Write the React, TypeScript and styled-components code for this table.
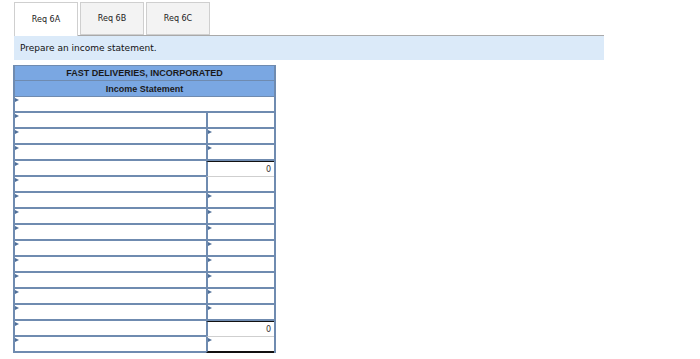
import * as React from 'react'
import styled, { createGlobalStyle } from 'styled-components'

const GlobalStyle = createGlobalStyle`
  html, body {
    margin: 0;
    padding: 0;
    background: #ffffff;
  }
`

const Page = styled.div`
  padding: 2px 0 0 14px;
  width: 590px;
  font-family: 'DejaVu Sans', Verdana, sans-serif;
`

const TabBar = styled.div`
  display: flex;
  gap: 2px;
  height: 33px;
  border-bottom: 1px solid #a9a9a9;
`

const Tab = styled.div<{ $active?: boolean }>`
  width: 64px;
  height: ${p => (p.$active ? '34px' : '33px')};
  box-sizing: border-box;
  border: 1px solid #cfcfcf;
  border-bottom: ${p => (p.$active ? 'none' : '1px solid #cfcfcf')};
  background: ${p => (p.$active ? '#ffffff' : '#f3f3f3')};
  display: flex;
  align-items: center;
  justify-content: center;
  font-size: 8px;
  color: #222;
  position: relative;
  z-index: 1;
`

const Instruction = styled.div`
  height: 24px;
  background: #dbeaf9;
  display: flex;
  align-items: center;
  padding-left: 6px;
  font-size: 9px;
  color: #111;
`

const Sheet = styled.div`
  margin: 5px 0 0 -1px;
  width: 263px;
  border-left: 2px solid #6f8bb0;
  border-right: 2px solid #6f8bb0;
  box-sizing: border-box;
  font-family: 'Liberation Sans', Arial, sans-serif;
`

const HeadRow = styled.div`
  height: 16px;
  background: #7aa7e2;
  border-top: 1px solid #6f8bb0;
  border-bottom: 1px solid #6f8bb0;
  box-sizing: border-box;
  display: flex;
  align-items: center;
  justify-content: center;
  font-size: 9px;
  font-weight: bold;
  color: #1a1a1a;
  & + & {
    border-top: none;
  }
`

const Row = styled.div`
  display: flex;
  height: 16px;
`

const Cell = styled.div<{ $wide?: boolean }>`
  position: relative;
  box-sizing: border-box;
  width: ${p => (p.$wide ? '100%' : '191px')};
  height: 16px;
  background: #ffffff;
  border-bottom: 2px solid #6f8bb0;
`

const Amount = styled.div<{ $total?: boolean; $last?: boolean }>`
  position: relative;
  box-sizing: border-box;
  flex: 1;
  height: 16px;
  background: #ffffff;
  border-left: 2px solid #6f8bb0;
  border-top: ${p => (p.$total ? '1px solid #111' : 'none')};
  border-bottom: ${p => (p.$last ? '2px solid #111' : p.$total ? '1px solid #cfcfcf' : '2px solid #6f8bb0')};
  font-size: 8px;
  font-family: 'DejaVu Sans', Verdana, sans-serif;
  color: #333;
  display: flex;
  align-items: center;
  justify-content: flex-end;
  padding-right: 3px;
`

// little pointer in the corner of a dropdown cell
const Marker = styled.span`
  position: absolute;
  left: 0;
  top: 1px;
  width: 0;
  height: 0;
  border-top: 2px solid transparent;
  border-bottom: 2px solid transparent;
  border-left: 4px solid #4f6f99;
`

type Line = { arrow: boolean; value?: string; last?: boolean }

const lines: Line[] = [
  { arrow: false },
  { arrow: true },
  { arrow: true },
  { arrow: false, value: '0' },
  { arrow: false },
  { arrow: true },
  { arrow: true },
  { arrow: true },
  { arrow: true },
  { arrow: true },
  { arrow: true },
  { arrow: true },
  { arrow: true },
  { arrow: false, value: '0' },
  { arrow: true, last: true },
]

export default function App() {
  return (
    <>
      <GlobalStyle />
      <Page>
        <TabBar>
          <Tab $active>Req 6A</Tab>
          <Tab>Req 6B</Tab>
          <Tab>Req 6C</Tab>
        </TabBar>
        <Instruction>Prepare an income statement.</Instruction>
        <Sheet>
          <HeadRow>FAST DELIVERIES, INCORPORATED</HeadRow>
          <HeadRow>Income Statement</HeadRow>
          <Row>
            <Cell $wide>
              <Marker />
            </Cell>
          </Row>
          {lines.map((l, i) => (
            <Row key={i}>
              <Cell>
                <Marker />
              </Cell>
              <Amount $total={!!l.value} $last={l.last}>
                {l.arrow && <Marker />}
                {l.value}
              </Amount>
            </Row>
          ))}
        </Sheet>
      </Page>
    </>
  )
}
